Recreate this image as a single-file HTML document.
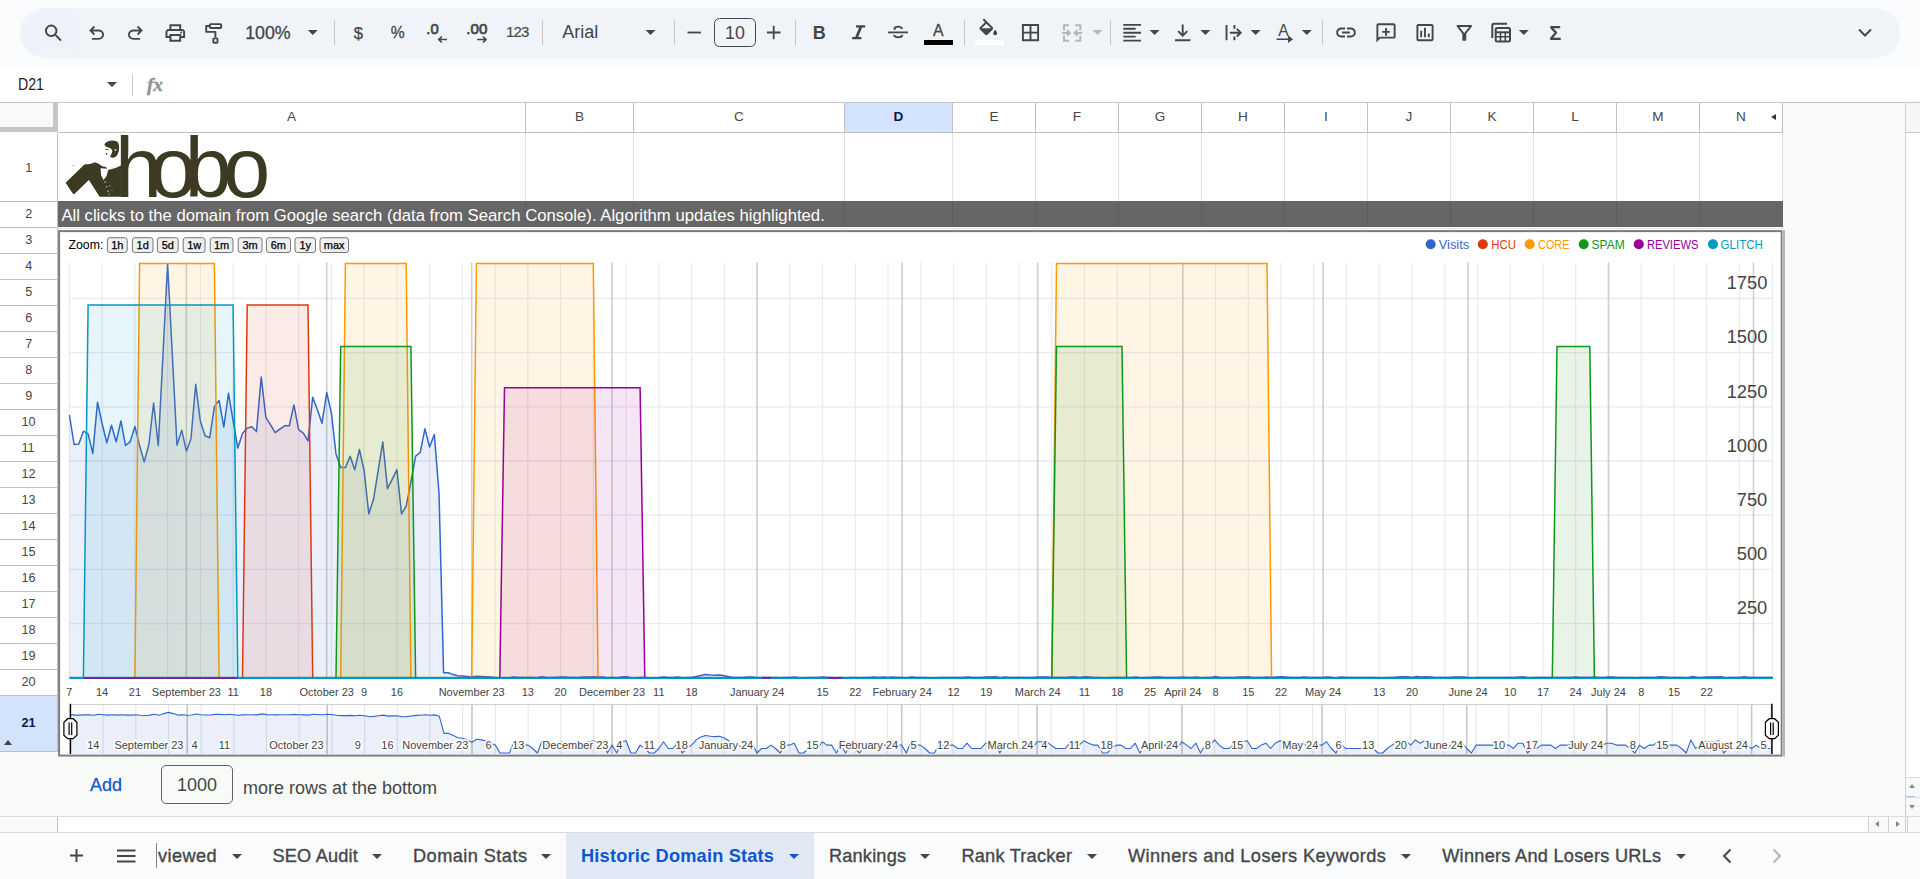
<!DOCTYPE html>
<html lang="en"><head><meta charset="utf-8"><title>Historic Domain Stats</title>
<style>
html,body{margin:0;padding:0}
body{width:1920px;height:879px;position:relative;overflow:hidden;background:#f9fbfd;font-family:"Liberation Sans",Arial,sans-serif;color:#444746}
.abs{position:absolute}
.tb{position:absolute;left:20px;top:8px;width:1880px;height:50px;border-radius:25px;background:#f0f4f9}
.sep{position:absolute;top:20px;width:1px;height:25px;background:#c7c7c7}
.t{position:absolute;white-space:nowrap;line-height:1}
.ic{position:absolute;overflow:visible}
.fbar{position:absolute;left:0;top:68px;width:1920px;height:34px;background:#fff;border-bottom:1px solid #c4c7c5}
.grid{position:absolute;left:0;top:103px;width:1920px;height:714px;background:#f8faf8}
.colh{position:absolute;top:0;height:29px;background:#fff;border-right:1px solid #c0c0c0;border-bottom:1px solid #c0c0c0;box-sizing:content-box;text-align:center;font-size:13.6px;line-height:28.600px;color:#444746}
.rowh{position:absolute;left:0;width:57px;background:#fff;border-right:1px solid #c0c0c0;border-bottom:1px solid #c0c0c0;text-align:center;font-size:13.6px;color:#444746}
.n{display:inline-block;transform:scaleX(0.93)}
.vl{position:absolute;width:1px;background:#e1e1e1}
.hl{position:absolute;height:1px;background:#e1e1e1}
.tabbar{position:absolute;left:0;top:833px;width:1920px;height:46px;background:#f9fbfd}
.tab{position:absolute;top:0;height:46px;font-size:18.2px;line-height:46px;color:#444746;white-space:nowrap;-webkit-text-stroke:0.35px #444746}
.dd{position:absolute;width:0;height:0;border-left:5px solid transparent;border-right:5px solid transparent;border-top:5px solid #444746}
</style></head><body>
<div class="tb"></div>
<svg class="ic" style="left:0;top:0" width="1920" height="66" viewBox="0 0 1920 66" font-family="Liberation Sans, Arial, sans-serif">
<rect x="31" y="15" width="47" height="35" fill="#edf1fa"/><g transform="translate(42.10 21.70) scale(0.9583)" fill="#444746" ><path d="M15.5 14h-.79l-.28-.27A6.471 6.471 0 0 0 16 9.5 6.5 6.5 0 1 0 9.5 16c1.61 0 3.09-.59 4.23-1.57l.27.28v.79l5 4.99L20.49 19l-4.99-5zm-6 0C7.01 14 5 11.99 5 9.5S7.01 5 9.5 5 14 7.01 14 9.5 11.99 14 9.5 14z"/></g><g transform="translate(85.45 44.45) scale(0.02323)" fill="#444746"><path d="M280-200v-80h284q63 0 109.5-40T720-420q0-60-46.5-100T564-560H312l104 104-56 56-200-200 200-200 56 56-104 104h252q97 0 166.5 63T800-420q0 94-69.5 157T564-200H280Z"/></g><g transform="translate(124.25 44.45) scale(0.02323)" fill="#444746"><path d="M396-200q-97 0-166.5-63T160-420q0-94 69.5-157T396-640h252L544-744l56-56 200 200-200 200-56-56 104-104H396q-63 0-109.5 40T240-420q0 60 46.5 100T396-280h284v80H396Z"/></g><g transform="translate(163.55 44.75) scale(0.02448)" fill="#444746"><path d="M640-640v-120H320v120h-80v-200h480v200h-80Zm-480 80h640-640Zm560 100q17 0 28.5-11.5T760-500q0-17-11.5-28.5T720-540q-17 0-28.5 11.5T680-500q0 17 11.5 28.5T720-460Zm-80 260v-160H320v160h320Zm80 80H240v-160H80v-240q0-51 35-85.500t85-34.500h560q51 0 85.500 34.500T880-520v240H720v160Zm80-240v-160q0-17-11.500-28.500T760-560H200q-17 0-28.500 11.500T160-520v160h80v-80h480v80h80Z"/></g><g fill="none" stroke="#444746" stroke-width="1.9" stroke-linejoin="round"><rect x="209.9" y="24.1" width="11.3" height="3.9" rx="0.8"/><path d="M209.9 26H206.200V31.900H215.400V37.500"/><rect x="213.300" y="38.400" width="4.200" height="4.400" rx="0.8"/></g><text x="245.2" y="39.2" font-size="17.8" fill="#444746" font-weight="normal" text-anchor="start" stroke="#444746" stroke-width="0.3">100%</text><path d="M307.8 30.0h10l-5 5z" fill="#444746"/><rect x="334.0" y="20" width="1" height="25" fill="#c7c7c7"/><text x="358.4" y="38.6" font-size="16.6" fill="#444746" font-weight="normal" text-anchor="middle" stroke="#444746" stroke-width="0.25">$</text><text x="397.6" y="38.4" font-size="15.6" fill="#444746" font-weight="normal" text-anchor="middle" stroke="#444746" stroke-width="0.3">%</text><text x="426.3" y="34.0" font-size="15.2" fill="#444746" font-weight="normal" text-anchor="start" stroke="#444746" stroke-width="0.7" textLength="12.3" lengthAdjust="spacingAndGlyphs">.0</text><path d="M447 39.500h-8M441.800 36.500l-3 3 3 3" stroke="#444746" stroke-width="1.7" fill="none"/><text x="466.3" y="34.0" font-size="15.2" fill="#444746" font-weight="normal" text-anchor="start" stroke="#444746" stroke-width="0.7" textLength="21" lengthAdjust="spacingAndGlyphs">.00</text><path d="M477 39.500h9M483 36.500l3 3-3 3" stroke="#444746" stroke-width="1.7" fill="none"/><text x="506.0" y="36.6" font-size="15" fill="#444746" font-weight="normal" text-anchor="start" letter-spacing="-0.9" stroke="#444746" stroke-width="0.15">123</text><rect x="542.0" y="20" width="1" height="25" fill="#c7c7c7"/><text x="562.2" y="38.3" font-size="18" fill="#444746" font-weight="normal" text-anchor="start" >Arial</text><path d="M645.5 30.0h10l-5 5z" fill="#444746"/><rect x="674.0" y="20" width="1" height="25" fill="#c7c7c7"/><path d="M687.500 32.500h13.500" stroke="#444746" stroke-width="1.8"/><rect x="714.500" y="18.500" width="41" height="28" rx="5" fill="none" stroke="#444746" stroke-width="1"/><text x="735.0" y="39.0" font-size="17.8" fill="#444746" font-weight="normal" text-anchor="middle" >10</text><path d="M767 32.500h13.500M773.700 25.800v13.500" stroke="#444746" stroke-width="1.8"/><rect x="795.0" y="20" width="1" height="25" fill="#c7c7c7"/><text x="819.2" y="38.8" font-size="18" fill="#444746" font-weight="bold" text-anchor="middle" >B</text><path d="M856 25.300h9.200v2.300h-3.100l-3.900 9.300h3.200v2.300h-9.300v-2.300h3.100l3.900-9.300h-3.100z" fill="#444746"/><text x="898.0" y="38.3" font-size="16.5" fill="#444746" font-weight="normal" text-anchor="middle" stroke="#444746" stroke-width="0.5">S</text><rect x="888" y="29.800" width="20" height="5" fill="#f0f4f9"/><rect x="888" y="31.500" width="20" height="1.800" fill="#444746"/><text x="938.4" y="36.4" font-size="16.6" fill="#444746" font-weight="normal" text-anchor="middle" stroke="#444746" stroke-width="0.3" textLength="10.600" lengthAdjust="spacingAndGlyphs">A</text><rect x="924" y="40" width="29" height="5" fill="#000"/><rect x="964.0" y="20" width="1" height="25" fill="#c7c7c7"/><g transform="translate(976.55 18.55) scale(0.9792)" fill="#444746" ><path d="M16.56 8.94L7.62 0 6.21 1.41l2.38 2.38-5.15 5.15a1.49 1.49 0 0 0 0 2.120l5.500 5.500c.29.29.68.44 1.060.44s.77-.15 1.060-.44l5.500-5.500c.59-.58.59-1.530 0-2.120zM5.210 10L10 5.210 14.790 10H5.210zM19 11.500s-2 2.170-2 3.500c0 1.100.9 2 2 2s2-.9 2-2c0-1.330-2-3.500-2-3.500z"/></g><rect x="975" y="40" width="29" height="5" fill="#fff"/><g transform="translate(1019.10 21.20) scale(0.9500)" fill="#444746" ><path d="M3 3v18h18V3H3zm8 16H5v-6h6v6zm0-8H5V5h6v6zm8 8h-6v-6h6v6zm0-8h-6V5h6v6z"/></g><path d="M1069 25.300H1064V30.400M1064 35.600V40.700H1069M1075.200 25.300H1080.300V30.400M1080.300 35.600V40.700H1075.200M1062.200 33H1069.800M1067 30.200L1069.900 33L1067 35.800M1082.200 33H1074.600M1077.400 30.200L1074.500 33L1077.400 35.800" fill="none" stroke="#b4b7ba" stroke-width="2"/><path d="M1092.5 30.0h10l-5 5z" fill="#b4b7ba"/><rect x="1110.0" y="20" width="1" height="25" fill="#c7c7c7"/><g transform="translate(1120.40 20.90) scale(0.9833)" fill="none" stroke="#444746" stroke-width="1.9" ><path d="M3 4h18M3 8h12.500M3 12h18M3 16h12.500M3 20h18"/></g><path d="M1149.6 30.0h10l-5 5z" fill="#444746"/><g transform="translate(1171.20 21.10) scale(0.9583)" fill="none" stroke="#444746" stroke-width="2" ><path d="M12 3.500v11.500M7.200 10.500l4.800 4.800 4.800-4.800M4 20h16"/></g><path d="M1200.4 30.0h10l-5 5z" fill="#444746"/><g transform="translate(1222.20 21.20) scale(0.9583)" fill="none" stroke="#444746" stroke-width="2" ><path d="M4.500 4v16M12.700 4v4M12.700 16v4M8 12h11M15.300 8l4 4-4 4"/></g><path d="M1250.6 30.0h10l-5 5z" fill="#444746"/><text x="1283.5" y="36.3" font-size="16.5" fill="#444746" font-weight="normal" text-anchor="middle" textLength="10.400" lengthAdjust="spacingAndGlyphs">A</text><path d="M1276.500 39.200h13.500M1288.800 36.900l3 2.300-3 2.300z" stroke="#444746" stroke-width="1.500" fill="#444746"/><path d="M1301.8 30.0h10l-5 5z" fill="#444746"/><rect x="1322.0" y="20" width="1" height="25" fill="#c7c7c7"/><g transform="translate(1334.25 20.75) scale(0.9792)" fill="#444746" ><path d="M3.9 12c0-1.71 1.39-3.1 3.1-3.1h4V7H7c-2.76 0-5 2.24-5 5s2.240 5 5 5h4v-1.900H7c-1.710 0-3.100-1.390-3.100-3.100zM8 13h8v-2H8v2zm9-6h-4v1.900h4c1.710 0 3.100 1.390 3.100 3.100s-1.390 3.100-3.100 3.100h-4V17h4c2.760 0 5-2.240 5-5s-2.240-5-5-5z"/></g><g transform="translate(1374.50 21.30) scale(0.9583)" fill="#444746" ><path d="M22 4c0-1.1-.9-2-2-2H4c-1.100 0-1.990.9-1.990 2L2 22l4-4h14c1.100 0 2-.9 2-2V4zm-2 12H5.170L4 17.170V4h16v12zm-9-1h2v-3h3v-2h-3V7h-2v3H8v2h3v3z"/></g><g transform="translate(1413.60 21.20) scale(0.9500)" fill="#444746" ><path d="M19 3H5c-1.100 0-2 .9-2 2v14c0 1.100.9 2 2 2h14c1.100 0 2-.9 2-2V5c0-1.100-.9-2-2-2zm0 16H5V5h14v14zM7 10h2v7H7zm4-3h2v10h-2zm4 6h2v4h-2z"/></g><g transform="translate(1452.55 21.05) scale(0.9792)" fill="#444746" ><path d="M7 6h10l-5.010 6.300L7 6zm-2.750-.39C6.270 8.200 10 13 10 13v6c0 .550.450 1 1 1h2c.550 0 1-.450 1-1v-6s3.720-4.800 5.740-7.390A.998.998 0 0 0 18.950 4H5.040c-.830 0-1.300.950-.790 1.610z"/></g><g fill="none" stroke="#444746"><path d="M1492.300 38V25.300a1.500 1.500 0 0 1 1.500-1.500H1507" stroke-width="2"/><rect x="1495.700" y="27.900" width="14.300" height="13.500" rx="1.500" stroke-width="2"/><path d="M1495.700 32.300H1510" stroke-width="2"/><path d="M1495.700 36.800H1510M1500.500 32.300V41.400M1505.300 32.300V41.400" stroke-width="1.600"/></g><path d="M1518.8 30.0h10l-5 5z" fill="#444746"/><text x="1555.2" y="39.5" font-size="20" fill="#444746" font-weight="bold" text-anchor="middle" >Σ</text><path d="M1859 29.500l6 6 6-6" stroke="#444746" stroke-width="2" fill="none"/>
</svg>
<div class="fbar"></div>
<div class="t" style="left:18px;top:76px;font-size:16.3px;color:#1f1f1f;transform:scaleX(0.87);transform-origin:0 0">D21</div>
<div class="dd" style="left:107px;top:82px;border-top-color:#444746"></div>
<div class="abs" style="left:132px;top:75px;width:1px;height:21px;background:#c7c7c7"></div>
<div class="t" style="left:147px;top:75px;font-size:19.5px;font-family:'Liberation Serif',serif;font-style:italic;font-weight:bold;color:#8e9195;letter-spacing:-0.3px;-webkit-text-stroke:0.3px #8e9195">fx</div>
<div class="grid">
<div class="abs" style="left:58px;top:30px;width:1725px;height:624px;background:#fff"></div>
<div class="abs" style="left:0;top:0;width:53px;height:24px;background:#f8f9fa"></div><div class="abs" style="left:53px;top:0;width:5px;height:29px;background:#c6c6c6"></div><div class="abs" style="left:0;top:24px;width:58px;height:5px;background:#c6c6c6"></div>
<div class="colh" style="left:58px;width:467px;">A</div><div class="colh" style="left:526px;width:107px;">B</div><div class="colh" style="left:634px;width:210px;">C</div><div class="colh" style="left:845px;width:107px;background:#d3e3fd;color:#041e49;font-weight:bold;">D</div><div class="colh" style="left:953px;width:82px;">E</div><div class="colh" style="left:1036px;width:82px;">F</div><div class="colh" style="left:1119px;width:82px;">G</div><div class="colh" style="left:1202px;width:82px;">H</div><div class="colh" style="left:1285px;width:82px;">I</div><div class="colh" style="left:1368px;width:82px;">J</div><div class="colh" style="left:1451px;width:82px;">K</div><div class="colh" style="left:1534px;width:82px;">L</div><div class="colh" style="left:1617px;width:82px;">M</div><div class="colh" style="left:1700px;width:82px;">N</div>
<div class="abs" style="left:1771px;top:11.3px;width:0;height:0;border-top:3.8px solid transparent;border-bottom:3.8px solid transparent;border-right:5.2px solid #333"></div>
<div class="rowh" style="top:30px;height:68px;line-height:69px;"><span class="n">1</span></div><div class="rowh" style="top:99px;height:25px;line-height:23px;"><span class="n">2</span></div><div class="rowh" style="top:125px;height:25px;line-height:23px;"><span class="n">3</span></div><div class="rowh" style="top:151px;height:25px;line-height:23px;"><span class="n">4</span></div><div class="rowh" style="top:177px;height:25px;line-height:23px;"><span class="n">5</span></div><div class="rowh" style="top:203px;height:25px;line-height:23px;"><span class="n">6</span></div><div class="rowh" style="top:229px;height:25px;line-height:23px;"><span class="n">7</span></div><div class="rowh" style="top:255px;height:25px;line-height:23px;"><span class="n">8</span></div><div class="rowh" style="top:281px;height:25px;line-height:23px;"><span class="n">9</span></div><div class="rowh" style="top:307px;height:25px;line-height:23px;"><span class="n">10</span></div><div class="rowh" style="top:333px;height:25px;line-height:23px;"><span class="n">11</span></div><div class="rowh" style="top:359px;height:25px;line-height:23px;"><span class="n">12</span></div><div class="rowh" style="top:385px;height:25px;line-height:23px;"><span class="n">13</span></div><div class="rowh" style="top:411px;height:25px;line-height:23px;"><span class="n">14</span></div><div class="rowh" style="top:437px;height:25px;line-height:23px;"><span class="n">15</span></div><div class="rowh" style="top:463px;height:25px;line-height:23px;"><span class="n">16</span></div><div class="rowh" style="top:489px;height:25px;line-height:23px;"><span class="n">17</span></div><div class="rowh" style="top:515px;height:25px;line-height:23px;"><span class="n">18</span></div><div class="rowh" style="top:541px;height:25px;line-height:23px;"><span class="n">19</span></div><div class="rowh" style="top:567px;height:25px;line-height:23px;"><span class="n">20</span></div><div class="rowh" style="top:593px;height:55px;line-height:54px;background:#d3e3fd;color:#041e49;font-weight:bold;"><span class="n">21</span></div>
<div class="abs" style="left:4px;top:637px;width:0;height:0;border-left:4.5px solid transparent;border-right:4.5px solid transparent;border-bottom:5px solid #444"></div>
<div class="vl" style="left:525px;top:30px;height:69px"></div><div class="vl" style="left:633px;top:30px;height:69px"></div><div class="vl" style="left:844px;top:30px;height:69px"></div><div class="vl" style="left:952px;top:30px;height:69px"></div><div class="vl" style="left:1035px;top:30px;height:69px"></div><div class="vl" style="left:1118px;top:30px;height:69px"></div><div class="vl" style="left:1201px;top:30px;height:69px"></div><div class="vl" style="left:1284px;top:30px;height:69px"></div><div class="vl" style="left:1367px;top:30px;height:69px"></div><div class="vl" style="left:1450px;top:30px;height:69px"></div><div class="vl" style="left:1533px;top:30px;height:69px"></div><div class="vl" style="left:1616px;top:30px;height:69px"></div><div class="vl" style="left:1699px;top:30px;height:69px"></div><div class="vl" style="left:1782px;top:30px;height:69px"></div>
<div class="hl" style="left:58px;top:98px;width:1725px"></div><div class="hl" style="left:58px;top:125px;width:1725px;background:#e6e6e6"></div>
<svg class="ic" style="left:0;top:-103px" width="1920" height="879" viewBox="0 0 1920 879" font-family="Liberation Sans, Arial, sans-serif">
<title>hobo</title><text font-size="84.500" fill="#3c3a23" y="197" x="114.930 149.700 184.730 223.300">hobo</text>
<g transform="translate(60 134) scale(0.07508)" fill="#3c3a23"><path d="M75 650L325 405L400 398L465 376L520 398L560 428L612 440L640 478L740 452L812 418V836H528L385 612L185 806L158 775Z"/><path d="M590 137C618 92 700 68 760 100C796 130 796 222 766 272C742 312 700 326 670 306C664 290 690 270 695 240C700 214 690 196 660 186C634 179 608 176 590 137Z"/><path d="M604 198l44 8-2 12-44-8zM612 252l18 4-4 24-18-8z"/><path d="M540 456L646 462L620 560L580 612L548 550Z" fill="#fff"/><circle cx="738" cy="214" r="13" fill="#fff" fill-opacity="0.8"/><g fill="#fff" fill-opacity="0.75"><circle cx="600" cy="640" r="10"/><circle cx="622" cy="702" r="9"/><circle cx="664" cy="690" r="8"/><circle cx="640" cy="762" r="10"/><circle cx="692" cy="750" r="7"/><circle cx="655" cy="800" r="9"/></g><path d="M170 410l22 10-4 10-22-10z" fill-opacity="0.5"/></g>
</svg>
<div class="abs" style="left:58px;top:98px;width:1725px;height:26px;background:#666"></div>
<div class="abs" style="left:525px;top:98px;width:1px;height:26px;background:#5e5e5e"></div><div class="abs" style="left:633px;top:98px;width:1px;height:26px;background:#5e5e5e"></div><div class="abs" style="left:844px;top:98px;width:1px;height:26px;background:#5e5e5e"></div><div class="abs" style="left:952px;top:98px;width:1px;height:26px;background:#5e5e5e"></div><div class="abs" style="left:1035px;top:98px;width:1px;height:26px;background:#5e5e5e"></div><div class="abs" style="left:1118px;top:98px;width:1px;height:26px;background:#5e5e5e"></div><div class="abs" style="left:1201px;top:98px;width:1px;height:26px;background:#5e5e5e"></div><div class="abs" style="left:1284px;top:98px;width:1px;height:26px;background:#5e5e5e"></div><div class="abs" style="left:1367px;top:98px;width:1px;height:26px;background:#5e5e5e"></div><div class="abs" style="left:1450px;top:98px;width:1px;height:26px;background:#5e5e5e"></div><div class="abs" style="left:1533px;top:98px;width:1px;height:26px;background:#5e5e5e"></div><div class="abs" style="left:1616px;top:98px;width:1px;height:26px;background:#5e5e5e"></div><div class="abs" style="left:1699px;top:98px;width:1px;height:26px;background:#5e5e5e"></div>
<div class="t" style="left:61.4px;top:104.600px;font-size:16.7px;color:#fff">All clicks to the domain from Google search (data from Search Console). Algorithm updates highlighted.</div>
<svg class="ic" style="left:0;top:-103px" width="1920" height="879" viewBox="0 0 1920 879" font-family="Liberation Sans, Arial, sans-serif">
<rect x="59.100" y="231.100" width="1722.600" height="524.500" fill="#fff" stroke="#7d7d7d" stroke-width="2"/><rect x="1782.700" y="230.100" width="0.600" height="526.500" fill="#fff"/><rect x="1783.300" y="230.100" width="1.400" height="526.500" fill="#9a9a9a"/>
<text x="68.500" y="249" font-size="12.300" fill="#000">Zoom:</text><rect x="107.4" y="237.700" width="19.8" height="14.800" rx="2.500" fill="#efefef" stroke="#767676" stroke-width="1"/><text x="117.3" y="248.700" font-size="11" fill="#000" text-anchor="middle" stroke="#000" stroke-width="0.250">1h</text><rect x="132.4" y="237.700" width="20.6" height="14.800" rx="2.500" fill="#efefef" stroke="#767676" stroke-width="1"/><text x="142.7" y="248.700" font-size="11" fill="#000" text-anchor="middle" stroke="#000" stroke-width="0.250">1d</text><rect x="157.4" y="237.700" width="20.8" height="14.800" rx="2.500" fill="#efefef" stroke="#767676" stroke-width="1"/><text x="167.8" y="248.700" font-size="11" fill="#000" text-anchor="middle" stroke="#000" stroke-width="0.250">5d</text><rect x="183.2" y="237.700" width="21.8" height="14.800" rx="2.500" fill="#efefef" stroke="#767676" stroke-width="1"/><text x="194.2" y="248.700" font-size="11" fill="#000" text-anchor="middle" stroke="#000" stroke-width="0.250">1w</text><rect x="210.2" y="237.700" width="22.8" height="14.800" rx="2.500" fill="#efefef" stroke="#767676" stroke-width="1"/><text x="221.6" y="248.700" font-size="11" fill="#000" text-anchor="middle" stroke="#000" stroke-width="0.250">1m</text><rect x="238.2" y="237.700" width="23.8" height="14.800" rx="2.500" fill="#efefef" stroke="#767676" stroke-width="1"/><text x="250.1" y="248.700" font-size="11" fill="#000" text-anchor="middle" stroke="#000" stroke-width="0.250">3m</text><rect x="266.4" y="237.700" width="24.1" height="14.800" rx="2.500" fill="#efefef" stroke="#767676" stroke-width="1"/><text x="278.4" y="248.700" font-size="11" fill="#000" text-anchor="middle" stroke="#000" stroke-width="0.250">6m</text><rect x="295" y="237.700" width="20.5" height="14.800" rx="2.500" fill="#efefef" stroke="#767676" stroke-width="1"/><text x="305.2" y="248.700" font-size="11" fill="#000" text-anchor="middle" stroke="#000" stroke-width="0.250">1y</text><rect x="320" y="237.700" width="28.5" height="14.800" rx="2.500" fill="#efefef" stroke="#767676" stroke-width="1"/><text x="334.2" y="248.700" font-size="11" fill="#000" text-anchor="middle" stroke="#000" stroke-width="0.250">max</text>
<circle cx="1430.7" cy="244.300" r="5" fill="#3366cc"/><text x="1438.8" y="248.600" font-size="12" fill="#3366cc" textLength="30.3" lengthAdjust="spacingAndGlyphs">Visits</text><circle cx="1482.8" cy="244.300" r="5" fill="#dc3912"/><text x="1491.2" y="248.600" font-size="12" fill="#dc3912" textLength="24.8" lengthAdjust="spacingAndGlyphs">HCU</text><circle cx="1529.7" cy="244.300" r="5" fill="#ff9900"/><text x="1538.1" y="248.600" font-size="12" fill="#ff9900" textLength="31.3" lengthAdjust="spacingAndGlyphs">CORE</text><circle cx="1583.7" cy="244.300" r="5" fill="#109618"/><text x="1591.6" y="248.600" font-size="12" fill="#109618" textLength="33.2" lengthAdjust="spacingAndGlyphs">SPAM</text><circle cx="1638.8" cy="244.300" r="5" fill="#990099"/><text x="1646.9" y="248.600" font-size="12" fill="#990099" textLength="51.5" lengthAdjust="spacingAndGlyphs">REVIEWS</text><circle cx="1712.9" cy="244.300" r="5" fill="#0099c6"/><text x="1720.6" y="248.600" font-size="12" fill="#0099c6" textLength="42.2" lengthAdjust="spacingAndGlyphs">GLITCH</text>
<path d="M69.4 262.500V677M102.1 262.500V677M134.9 262.500V677M167.6 262.500V677M200.4 262.500V677M233.1 262.500V677M265.9 262.500V677M298.6 262.500V677M331.4 262.500V677M364.1 262.500V677M396.9 262.500V677M429.6 262.500V677M462.4 262.500V677M495.1 262.500V677M527.8 262.500V677M560.6 262.500V677M593.3 262.500V677M626.1 262.500V677M658.8 262.500V677M691.6 262.500V677M724.3 262.500V677M757.1 262.500V677M789.8 262.500V677M822.6 262.500V677M855.3 262.500V677M888 262.500V677M920.8 262.500V677M953.5 262.500V677M986.3 262.500V677M1019 262.500V677M1051.8 262.500V677M1084.5 262.500V677M1117.3 262.500V677M1150 262.500V677M1182.8 262.500V677M1215.5 262.500V677M1248.3 262.500V677M1281 262.500V677M1313.7 262.500V677M1346.5 262.500V677M1379.2 262.500V677M1412 262.500V677M1444.7 262.500V677M1477.5 262.500V677M1510.2 262.500V677M1543 262.500V677M1575.7 262.500V677M1608.5 262.500V677M1641.2 262.500V677M1674 262.500V677M1706.7 262.500V677M1739.4 262.500V677M1772.2 262.500V677" stroke="#e9e9ee" stroke-width="1.100" fill="none"/><path d="M69 623.6H1773M69 569.4H1773M69 515.2H1773M69 461H1773M69 406.8H1773M69 352.6H1773M69 298.4H1773" stroke="#e9e9f6" stroke-width="1.300" fill="none"/><path d="M186.4 262.500V677M326.7 262.500V677M471.7 262.500V677M612 262.500V677M757.1 262.500V677M902.1 262.500V677M1037.7 262.500V677M1182.8 262.500V677M1323.1 262.500V677M1468.1 262.500V677M1608.5 262.500V677M1753.5 262.500V677" stroke="#cfcfcf" stroke-width="1.600" fill="none"/>
<path d="M69.4 415L74.1 444.5L78.8 444L83.4 431.2L88.1 433.8L92.8 453.4L97.5 402.2L102.1 423.5L106.8 442.8L111.5 425.2L116.2 441.8L120.9 421L125.5 445.4L130.2 441.8L134.9 426.4L139.6 445.7L144.2 461.9L148.9 444.5L153.6 403L158.3 445.7L163 354.6L167.6 263.8L172.3 354.6L177 445.3L181.7 430.2L186.4 451.2L191 438.4L195.7 384.3L200.4 421.5L205.1 435.8L209.7 437.8L214.4 406.6L219.1 400.5L223.8 427.1L228.5 393.3L233.1 420.7L237.8 448.1L242.5 433.5L247.2 428.1L251.8 426.8L256.5 431.6L261.2 377L265.9 417.7L270.6 424.8L275.2 432.6L279.9 429.1L284.6 425.8L289.3 425.8L293.9 404.9L298.6 429.7L303.3 433.2L308 440.9L312.7 397.2L317.3 409.4L322 423.3L326.7 392.5L331.4 413.2L336 453.9L340.7 467.6L345.4 467.6L350.1 456.3L354.8 469.7L359.4 449.5L364.1 470.5L368.8 513.9L373.5 499.3L378.1 471.1L382.8 441.9L387.5 488.7L392.2 479.3L396.9 469.6L401.5 513.9L406.2 506.2L410.9 482L415.6 456.1L420.2 452.5L424.9 428.8L429.6 447L434.3 434.6L439 492.9L443.6 672.7L448.3 672.7L453 674.6L457.7 675.8L462.4 676L467 676.5L471.7 677L476.4 676.3L481.1 676.5L485.7 676.7L490.4 677.1L495.1 677.4L499.8 677.8L504.5 677.8L509.1 677.8L513.8 676.9L518.5 677.4L523.2 677.4L527.8 677.4L532.5 677.6L537.2 677.8L541.9 676.7L546.6 677.4L551.2 677.4L555.9 677.6L560.6 676.9L565.3 677.1L569.9 677.6L574.6 677.6L579.3 677.4L584 677.1L588.7 676.9L593.3 676.7L598 677.1L602.7 676.9L607.4 677.8L612 677.4L616.7 677.8L621.4 676.9L626.1 676.7L630.8 677.8L635.4 677.8L640.1 677.4L644.8 677.6L649.5 677.8L654.1 677.8L658.8 677.6L663.5 676.9L668.2 677.6L672.9 677.6L677.5 677.1L682.2 677.8L686.9 677.6L691.6 677.4L696.3 676.5L700.9 675.4L705.6 674.5L710.3 675L715 675.2L719.6 675L724.3 675.8L729 676.7L733.7 677.6L738.4 677.4L743 677.6L747.7 677.1L752.4 677.1L757.1 677.8L761.7 677.6L766.4 677.6L771.1 677.4L775.8 677.6L780.5 677.8L785.1 677.4L789.8 677.4L794.5 677.1L799.2 677.8L803.8 677.8L808.5 677.6L813.2 677.6L817.9 677.6L822.6 676.9L827.2 677.4L831.9 677.4L836.6 677.8L841.3 677.4L845.9 677.8L850.6 677.4L855.3 677.6L860 677.8L864.7 677.4L869.3 677.4L874 677.1L878.7 677.6L883.4 677.1L888 677.6L892.7 677.1L897.4 677.4L902.1 677.4L906.8 677.8L911.4 676.9L916.1 677.4L920.8 677.4L925.5 677.6L930.2 677.8L934.8 677.8L939.5 677.4L944.2 677.4L948.9 677.4L953.5 677.4L958.2 677.6L962.9 677.6L967.6 677.1L972.3 677.6L976.9 677.6L981.6 677.6L986.3 677.1L991 677.1L995.6 676.7L1000.3 677.8L1005 677.1L1009.7 677.4L1014.4 677.4L1019 677.6L1023.7 677.6L1028.4 677.4L1033.1 677.6L1037.7 676.9L1042.4 676.9L1047.1 676.9L1051.8 677.4L1056.5 677.6L1061.1 677.6L1065.8 677.6L1070.5 677.1L1075.2 677.1L1079.8 677.4L1084.5 676.7L1089.2 677.1L1093.9 677.4L1098.6 677.4L1103.2 677.8L1107.9 677.8L1112.6 677.6L1117.3 677.4L1122 677.4L1126.6 677.6L1131.3 677.6L1136 677.1L1140.7 677.8L1145.3 677.4L1150 677.6L1154.7 677.1L1159.4 676.9L1164.1 677.4L1168.7 677.4L1173.4 677.4L1178.1 677.6L1182.8 676.9L1187.4 677.4L1192.1 677.6L1196.8 677.1L1201.5 677.8L1206.2 677.4L1210.8 677.4L1215.5 676.5L1220.2 677.4L1224.9 677.6L1229.5 677.6L1234.2 677.4L1238.9 677.1L1243.6 676.9L1248.3 676.7L1252.9 677.6L1257.6 677.6L1262.3 677.4L1267 677.1L1271.6 677.6L1276.3 677.1L1281 676.7L1285.7 676.9L1290.4 677.4L1295 677.4L1299.7 677.4L1304.4 676.9L1309.1 677.6L1313.7 677.4L1318.4 677.4L1323.1 677.4L1327.8 676.9L1332.5 677.6L1337.1 677.8L1341.8 677.1L1346.5 677.6L1351.2 677.6L1355.9 677.6L1360.5 677.6L1365.2 677.6L1369.9 677.4L1374.6 677.6L1379.2 677.8L1383.9 677.8L1388.6 677.6L1393.3 677.4L1398 676.9L1402.6 676.7L1407.3 676.7L1412 677.4L1416.7 676.5L1421.3 677.1L1426 676.7L1430.7 677.1L1435.4 677.6L1440.1 677.6L1444.7 677.6L1449.4 677.6L1454.1 676.9L1458.8 677.1L1463.4 677.1L1468.1 677.6L1472.8 677.8L1477.5 677.4L1482.2 677.4L1486.8 677.4L1491.5 677.4L1496.2 677.4L1500.9 677.4L1505.5 677.4L1510.2 677.4L1514.9 677.6L1519.6 677.1L1524.3 677.1L1528.9 677.8L1533.6 677.6L1538.3 677.6L1543 677.4L1547.6 677.4L1552.3 677.4L1557 677.6L1561.7 677.4L1566.4 677.4L1571 677.4L1575.7 677.1L1580.4 677.4L1585.1 677.4L1589.8 677.4L1594.4 676.9L1599.1 677.6L1603.8 677.4L1608.5 677.1L1613.1 677.1L1617.8 677.4L1622.5 677.4L1627.2 677.4L1631.9 677.6L1636.5 677.8L1641.2 677.4L1645.9 677.6L1650.6 677.4L1655.2 677.4L1659.9 676.7L1664.6 676.9L1669.3 677.4L1674 677.4L1678.6 677.4L1683.3 677.6L1688 677.8L1692.7 676.5L1697.3 677.6L1702 677.4L1706.7 676.9L1711.4 676.9L1716.1 676.9L1720.7 676.7L1725.4 677.8L1730.1 677.6L1734.8 677.6L1739.4 677.6L1744.1 676.7L1748.8 677.4L1753.5 677.6L1758.2 677.4L1762.8 677.6L1767.5 677.6L1772.2 677.6L1772.2 677.8L69.4 677.8Z" fill="#3366cc" fill-opacity="0.1" stroke="none"/><path d="M69.4 415L74.1 444.5L78.8 444L83.4 431.2L88.1 433.8L92.8 453.4L97.5 402.2L102.1 423.5L106.8 442.8L111.5 425.2L116.2 441.8L120.9 421L125.5 445.4L130.2 441.8L134.9 426.4L139.6 445.7L144.2 461.9L148.9 444.5L153.6 403L158.3 445.7L163 354.6L167.6 263.8L172.3 354.6L177 445.3L181.7 430.2L186.4 451.2L191 438.4L195.7 384.3L200.4 421.5L205.1 435.8L209.7 437.8L214.4 406.6L219.1 400.5L223.8 427.1L228.5 393.3L233.1 420.7L237.8 448.1L242.5 433.5L247.2 428.1L251.8 426.8L256.5 431.6L261.2 377L265.9 417.7L270.6 424.8L275.2 432.6L279.9 429.1L284.6 425.8L289.3 425.8L293.9 404.9L298.6 429.7L303.3 433.2L308 440.9L312.7 397.2L317.3 409.4L322 423.3L326.7 392.5L331.4 413.2L336 453.9L340.7 467.6L345.4 467.6L350.1 456.3L354.8 469.7L359.4 449.5L364.1 470.5L368.8 513.9L373.5 499.3L378.1 471.1L382.8 441.9L387.5 488.7L392.2 479.3L396.9 469.6L401.5 513.9L406.2 506.2L410.9 482L415.6 456.1L420.2 452.5L424.9 428.8L429.6 447L434.3 434.6L439 492.9L443.6 672.7L448.3 672.7L453 674.6L457.7 675.8L462.4 676L467 676.5L471.7 677L476.4 676.3L481.1 676.5L485.7 676.7L490.4 677.1L495.1 677.4L499.8 677.8L504.5 677.8L509.1 677.8L513.8 676.9L518.5 677.4L523.2 677.4L527.8 677.4L532.5 677.6L537.2 677.8L541.9 676.7L546.6 677.4L551.2 677.4L555.9 677.6L560.6 676.9L565.3 677.1L569.9 677.6L574.6 677.6L579.3 677.4L584 677.1L588.7 676.9L593.3 676.7L598 677.1L602.7 676.9L607.4 677.8L612 677.4L616.7 677.8L621.4 676.9L626.1 676.7L630.8 677.8L635.4 677.8L640.1 677.4L644.8 677.6L649.5 677.8L654.1 677.8L658.8 677.6L663.5 676.9L668.2 677.6L672.9 677.6L677.5 677.1L682.2 677.8L686.9 677.6L691.6 677.4L696.3 676.5L700.9 675.4L705.6 674.5L710.3 675L715 675.2L719.6 675L724.3 675.8L729 676.7L733.7 677.6L738.4 677.4L743 677.6L747.7 677.1L752.4 677.1L757.1 677.8L761.7 677.6L766.4 677.6L771.1 677.4L775.8 677.6L780.5 677.8L785.1 677.4L789.8 677.4L794.5 677.1L799.2 677.8L803.8 677.8L808.5 677.6L813.2 677.6L817.9 677.6L822.6 676.9L827.2 677.4L831.9 677.4L836.6 677.8L841.3 677.4L845.9 677.8L850.6 677.4L855.3 677.6L860 677.8L864.7 677.4L869.3 677.4L874 677.1L878.7 677.6L883.4 677.1L888 677.6L892.7 677.1L897.4 677.4L902.1 677.4L906.8 677.8L911.4 676.9L916.1 677.4L920.8 677.4L925.5 677.6L930.2 677.8L934.8 677.8L939.5 677.4L944.2 677.4L948.9 677.4L953.5 677.4L958.2 677.6L962.9 677.6L967.6 677.1L972.3 677.6L976.9 677.6L981.6 677.6L986.3 677.1L991 677.1L995.6 676.7L1000.3 677.8L1005 677.1L1009.7 677.4L1014.4 677.4L1019 677.6L1023.7 677.6L1028.4 677.4L1033.1 677.6L1037.7 676.9L1042.4 676.9L1047.1 676.9L1051.8 677.4L1056.5 677.6L1061.1 677.6L1065.8 677.6L1070.5 677.1L1075.2 677.1L1079.8 677.4L1084.5 676.7L1089.2 677.1L1093.9 677.4L1098.6 677.4L1103.2 677.8L1107.9 677.8L1112.6 677.6L1117.3 677.4L1122 677.4L1126.6 677.6L1131.3 677.6L1136 677.1L1140.7 677.8L1145.3 677.4L1150 677.6L1154.7 677.1L1159.4 676.9L1164.1 677.4L1168.7 677.4L1173.4 677.4L1178.1 677.6L1182.8 676.9L1187.4 677.4L1192.1 677.6L1196.8 677.1L1201.5 677.8L1206.2 677.4L1210.8 677.4L1215.5 676.5L1220.2 677.4L1224.9 677.6L1229.5 677.6L1234.2 677.4L1238.9 677.1L1243.6 676.9L1248.3 676.7L1252.9 677.6L1257.6 677.6L1262.3 677.4L1267 677.1L1271.6 677.6L1276.3 677.1L1281 676.7L1285.7 676.9L1290.4 677.4L1295 677.4L1299.7 677.4L1304.4 676.9L1309.1 677.6L1313.7 677.4L1318.4 677.4L1323.1 677.4L1327.8 676.9L1332.5 677.6L1337.1 677.8L1341.8 677.1L1346.5 677.6L1351.2 677.6L1355.9 677.6L1360.5 677.6L1365.2 677.6L1369.9 677.4L1374.6 677.6L1379.2 677.8L1383.9 677.8L1388.6 677.6L1393.3 677.4L1398 676.9L1402.6 676.7L1407.3 676.7L1412 677.4L1416.7 676.5L1421.3 677.1L1426 676.7L1430.7 677.1L1435.4 677.6L1440.1 677.6L1444.7 677.6L1449.4 677.6L1454.1 676.9L1458.8 677.1L1463.4 677.1L1468.1 677.6L1472.8 677.8L1477.5 677.4L1482.2 677.4L1486.8 677.4L1491.5 677.4L1496.2 677.4L1500.9 677.4L1505.5 677.4L1510.2 677.4L1514.9 677.6L1519.6 677.1L1524.3 677.1L1528.9 677.8L1533.6 677.6L1538.3 677.6L1543 677.4L1547.6 677.4L1552.3 677.4L1557 677.6L1561.7 677.4L1566.4 677.4L1571 677.4L1575.7 677.1L1580.4 677.4L1585.1 677.4L1589.8 677.4L1594.4 676.9L1599.1 677.6L1603.8 677.4L1608.5 677.1L1613.1 677.1L1617.8 677.4L1622.5 677.4L1627.2 677.4L1631.9 677.6L1636.5 677.8L1641.2 677.4L1645.9 677.6L1650.6 677.4L1655.2 677.4L1659.9 676.7L1664.6 676.9L1669.3 677.4L1674 677.4L1678.6 677.4L1683.3 677.6L1688 677.8L1692.7 676.5L1697.3 677.6L1702 677.4L1706.7 676.9L1711.4 676.9L1716.1 676.9L1720.7 676.7L1725.4 677.8L1730.1 677.6L1734.8 677.6L1739.4 677.6L1744.1 676.7L1748.8 677.4L1753.5 677.6L1758.2 677.4L1762.8 677.6L1767.5 677.6L1772.2 677.6" fill="none" stroke="#3366cc" stroke-width="1.500" stroke-linejoin="round"/>
<path d="M242.5 677.8L247.2 304.9L308 304.9L312.7 677.8Z" fill="#dc3912" fill-opacity="0.1" stroke="none"/><path d="M242.5 677.8L247.2 304.9L308 304.9L312.7 677.8" fill="none" stroke="#dc3912" stroke-width="1.500" stroke-linejoin="miter"/>
<path d="M134.9 677.8L139.6 263.5L214.4 263.5L219.1 677.8Z" fill="#ff9900" fill-opacity="0.1" stroke="none"/><path d="M134.9 677.8L139.6 263.5L214.4 263.5L219.1 677.8" fill="none" stroke="#ff9900" stroke-width="1.500" stroke-linejoin="miter"/><path d="M340.7 677.8L345.4 263.5L406.2 263.5L410.9 677.8Z" fill="#ff9900" fill-opacity="0.1" stroke="none"/><path d="M340.7 677.8L345.4 263.5L406.2 263.5L410.9 677.8" fill="none" stroke="#ff9900" stroke-width="1.500" stroke-linejoin="miter"/><path d="M471.7 677.8L476.4 263.5L593.3 263.5L598 677.8Z" fill="#ff9900" fill-opacity="0.1" stroke="none"/><path d="M471.7 677.8L476.4 263.5L593.3 263.5L598 677.8" fill="none" stroke="#ff9900" stroke-width="1.500" stroke-linejoin="miter"/><path d="M1051.8 677.8L1056.5 263.5L1267 263.5L1271.6 677.8Z" fill="#ff9900" fill-opacity="0.1" stroke="none"/><path d="M1051.8 677.8L1056.5 263.5L1267 263.5L1271.6 677.8" fill="none" stroke="#ff9900" stroke-width="1.500" stroke-linejoin="miter"/>
<path d="M336 677.8L340.7 346.4L410.9 346.4L415.6 677.8Z" fill="#109618" fill-opacity="0.1" stroke="none"/><path d="M336 677.8L340.7 346.4L410.9 346.4L415.6 677.8" fill="none" stroke="#109618" stroke-width="1.500" stroke-linejoin="miter"/><path d="M1051.8 677.8L1056.5 346.4L1122 346.4L1126.6 677.8Z" fill="#109618" fill-opacity="0.1" stroke="none"/><path d="M1051.8 677.8L1056.5 346.4L1122 346.4L1126.6 677.8" fill="none" stroke="#109618" stroke-width="1.500" stroke-linejoin="miter"/><path d="M1552.3 677.8L1557 346.4L1589.8 346.4L1594.4 677.8Z" fill="#109618" fill-opacity="0.1" stroke="none"/><path d="M1552.3 677.8L1557 346.4L1589.8 346.4L1594.4 677.8" fill="none" stroke="#109618" stroke-width="1.500" stroke-linejoin="miter"/>
<path d="M499.8 677.8L504.5 387.8L640.1 387.8L644.8 677.8Z" fill="#990099" fill-opacity="0.1" stroke="none"/><path d="M499.8 677.8L504.5 387.8L640.1 387.8L644.8 677.8" fill="none" stroke="#990099" stroke-width="1.500" stroke-linejoin="miter"/>
<path d="M69.400 678.200H1773" stroke="#0099c6" stroke-width="1.700"/><path d="M69.400 677.250H1773" stroke="#4a637c" stroke-width="0.800"/><path d="M83.4 678H237.8M762 678H771M827.600 678H841.700" stroke="#990099" stroke-width="1.500"/><path d="M83.4 677.8L88.1 304.9L233.1 304.9L237.8 677.8Z" fill="#0099c6" fill-opacity="0.1" stroke="none"/><path d="M83.4 677.8L88.1 304.9L233.1 304.9L237.8 677.8" fill="none" stroke="#0099c6" stroke-width="1.500" stroke-linejoin="miter"/>
<text x="1767.300" y="614.4" font-size="18.300" fill="#444" text-anchor="end">250</text><text x="1767.300" y="560.2" font-size="18.300" fill="#444" text-anchor="end">500</text><text x="1767.300" y="506" font-size="18.300" fill="#444" text-anchor="end">750</text><text x="1767.300" y="451.8" font-size="18.300" fill="#444" text-anchor="end">1000</text><text x="1767.300" y="397.6" font-size="18.300" fill="#444" text-anchor="end">1250</text><text x="1767.300" y="343.4" font-size="18.300" fill="#444" text-anchor="end">1500</text><text x="1767.300" y="289.2" font-size="18.300" fill="#444" text-anchor="end">1750</text>
<g font-size="11" fill="#444" text-anchor="middle"><text x="69.4" y="695.600">7</text><text x="102.1" y="695.600">14</text><text x="134.9" y="695.600">21</text><text x="186.4" y="695.600">September 23</text><text x="233.1" y="695.600">11</text><text x="265.9" y="695.600">18</text><text x="326.7" y="695.600">October 23</text><text x="364.1" y="695.600">9</text><text x="396.9" y="695.600">16</text><text x="471.7" y="695.600">November 23</text><text x="527.8" y="695.600">13</text><text x="560.6" y="695.600">20</text><text x="612" y="695.600">December 23</text><text x="658.8" y="695.600">11</text><text x="691.6" y="695.600">18</text><text x="757.1" y="695.600">January 24</text><text x="822.6" y="695.600">15</text><text x="855.3" y="695.600">22</text><text x="902.1" y="695.600">February 24</text><text x="953.5" y="695.600">12</text><text x="986.3" y="695.600">19</text><text x="1037.7" y="695.600">March 24</text><text x="1084.5" y="695.600">11</text><text x="1117.3" y="695.600">18</text><text x="1150" y="695.600">25</text><text x="1182.8" y="695.600">April 24</text><text x="1215.5" y="695.600">8</text><text x="1248.3" y="695.600">15</text><text x="1281" y="695.600">22</text><text x="1323.1" y="695.600">May 24</text><text x="1379.2" y="695.600">13</text><text x="1412" y="695.600">20</text><text x="1468.1" y="695.600">June 24</text><text x="1510.2" y="695.600">10</text><text x="1543" y="695.600">17</text><text x="1575.7" y="695.600">24</text><text x="1608.5" y="695.600">July 24</text><text x="1641.2" y="695.600">8</text><text x="1674" y="695.600">15</text><text x="1706.7" y="695.600">22</text></g>
<path d="M70 704.500H1772" stroke="#d0d0d0" stroke-width="1"/><path d="M103.1 705V754M135.8 705V754M168.5 705V754M201.2 705V754M233.8 705V754M266.5 705V754M299.2 705V754M331.9 705V754M364.6 705V754M397.3 705V754M430 705V754M462.7 705V754M495.4 705V754M528.1 705V754M560.8 705V754M593.4 705V754M626.1 705V754M658.8 705V754M691.5 705V754M724.2 705V754M756.9 705V754M789.6 705V754M822.3 705V754M855 705V754M887.6 705V754M920.3 705V754M953 705V754M985.7 705V754M1018.4 705V754M1051.1 705V754M1083.8 705V754M1116.5 705V754M1149.2 705V754M1181.9 705V754M1214.6 705V754M1247.2 705V754M1279.9 705V754M1312.6 705V754M1345.3 705V754M1378 705V754M1410.7 705V754M1443.4 705V754M1476.1 705V754M1508.8 705V754M1541.5 705V754M1574.1 705V754M1606.8 705V754M1639.5 705V754M1672.2 705V754M1704.9 705V754M1737.6 705V754M1770.3 705V754" stroke="#e6e6ea" stroke-width="1.100" fill="none"/><path d="M187.2 705V754M327.2 705V754M472 705V754M612.1 705V754M756.9 705V754M901.7 705V754M1037.1 705V754M1181.9 705V754M1322 705V754M1466.7 705V754M1606.8 705V754M1751.6 705V754" stroke="#c8c8c8" stroke-width="1.600" fill="none"/>
<path d="M70.4 714.6L75.1 715.1L79.7 715.1L84.4 714.9L89.1 714.9L93.8 715.3L98.4 714.3L103.1 714.7L107.8 715.1L112.4 714.8L117.1 715.1L121.8 714.7L126.4 715.1L131.1 715.1L135.8 714.8L140.4 715.2L145.1 715.5L149.8 715.1L154.5 714.3L159.1 715.2L163.8 713.6L168.5 712.4L173.1 713.6L177.8 715.1L182.5 714.8L187.2 715.3L191.8 715L196.5 714L201.2 714.7L205.8 715L210.5 715L215.2 714.4L219.8 714.3L224.5 714.8L229.2 714.2L233.8 714.7L238.5 715.2L243.2 714.9L247.9 714.8L252.5 714.8L257.2 714.9L261.9 713.9L266.5 714.6L271.2 714.7L275.9 714.9L280.6 714.8L285.2 714.8L289.9 714.8L294.6 714.4L299.2 714.8L303.9 714.9L308.6 715.1L313.2 714.2L317.9 714.5L322.6 714.7L327.2 714.2L331.9 714.5L336.6 715.3L341.3 715.6L345.9 715.6L350.6 715.4L355.3 715.7L359.9 715.2L364.6 715.7L369.3 716.8L374 716.4L378.6 715.7L383.3 715.1L388 716.1L392.6 715.9L397.3 715.7L402 716.8L406.6 716.6L411.3 716L416 715.4L420.6 715.3L425.3 714.8L430 715.2L434.7 714.9L439.3 716.2L444 733.4L448.7 733.4L453.3 735.6L458 737.8L462.7 738.3L467.4 739.9L472 742.2L476.7 739.2L481.4 739.9L486 740.8L490.7 743.2L495.4 745.1L500 753L504.7 753L509.4 753L514 741.8L518.7 745.1L523.4 745.1L528.1 745.1L532.7 748.5L537.4 753L542.1 740.8L546.7 745.1L551.4 745.1L556.1 748.5L560.8 741.8L565.4 743.2L570.1 748.5L574.8 748.5L579.4 745.1L584.1 743.2L588.8 741.8L593.4 740.8L598.1 743.2L602.8 741.8L607.4 753L612.1 745.1L616.8 753L621.5 741.8L626.1 740.8L630.8 753L635.5 753L640.1 745.1L644.8 748.5L649.5 753L654.1 753L658.8 748.5L663.5 741.8L668.2 748.5L672.8 748.5L677.5 743.2L682.2 753L686.8 748.5L691.5 745.1L696.2 739.9L700.9 737L705.5 735.5L710.2 736.2L714.9 736.6L719.5 736.2L724.2 738L728.9 740.8L733.5 748.5L738.2 745.1L742.9 748.5L747.5 743.2L752.2 743.2L756.9 753L761.6 748.5L766.2 748.5L770.9 745.1L775.6 748.5L780.2 753L784.9 745.1L789.6 745.1L794.2 743.2L798.9 753L803.6 753L808.3 748.5L812.9 748.5L817.6 748.5L822.3 741.8L826.9 745.1L831.6 745.1L836.3 753L840.9 745.1L845.6 753L850.3 745.1L855 748.5L859.6 753L864.3 745.1L869 745.1L873.6 743.2L878.3 748.5L883 743.2L887.6 748.5L892.3 743.2L897 745.1L901.7 745.1L906.3 753L911 741.8L915.7 745.1L920.3 745.1L925 748.5L929.7 753L934.3 753L939 745.1L943.7 745.1L948.4 745.1L953 745.1L957.7 748.5L962.4 748.5L967 743.2L971.7 748.5L976.4 748.5L981 748.5L985.7 743.2L990.4 743.2L995.1 740.8L999.7 753L1004.4 743.2L1009.1 745.1L1013.7 745.1L1018.4 748.5L1023.1 748.5L1027.8 745.1L1032.4 748.5L1037.1 741.8L1041.8 741.8L1046.4 741.8L1051.1 745.1L1055.8 748.5L1060.4 748.5L1065.1 748.5L1069.8 743.2L1074.5 743.2L1079.1 745.1L1083.8 740.8L1088.5 743.2L1093.1 745.1L1097.8 745.1L1102.5 753L1107.1 753L1111.8 748.5L1116.5 745.1L1121.2 745.1L1125.8 748.5L1130.5 748.5L1135.2 743.2L1139.8 753L1144.5 745.1L1149.2 748.5L1153.8 743.2L1158.5 741.8L1163.2 745.1L1167.9 745.1L1172.5 745.1L1177.2 748.5L1181.9 741.8L1186.5 745.1L1191.2 748.5L1195.9 743.2L1200.5 753L1205.2 745.1L1209.9 745.1L1214.6 739.9L1219.2 745.1L1223.9 748.5L1228.6 748.5L1233.2 745.1L1237.9 743.2L1242.6 741.8L1247.2 740.8L1251.9 748.5L1256.6 748.5L1261.2 745.1L1265.9 743.2L1270.6 748.5L1275.3 743.2L1279.9 740.8L1284.6 741.8L1289.3 745.1L1293.9 745.1L1298.6 745.1L1303.3 741.8L1308 748.5L1312.6 745.1L1317.3 745.1L1322 745.1L1326.6 741.8L1331.3 748.5L1336 753L1340.6 743.2L1345.3 748.5L1350 748.5L1354.7 748.5L1359.3 748.5L1364 748.5L1368.7 745.1L1373.3 748.5L1378 753L1382.7 753L1387.3 748.5L1392 745.1L1396.7 741.8L1401.4 740.8L1406 740.8L1410.7 745.1L1415.4 739.9L1420 743.2L1424.7 740.8L1429.4 743.2L1434 748.5L1438.7 748.5L1443.4 748.5L1448.1 748.5L1452.7 741.8L1457.4 743.2L1462.1 743.2L1466.7 748.5L1471.4 753L1476.1 745.1L1480.7 745.1L1485.4 745.1L1490.1 745.1L1494.8 745.1L1499.4 745.1L1504.1 745.1L1508.8 745.1L1513.4 748.5L1518.1 743.2L1522.8 743.2L1527.4 753L1532.1 748.5L1536.8 748.5L1541.5 745.1L1546.1 745.1L1550.8 745.1L1555.5 748.5L1560.1 745.1L1564.8 745.1L1569.5 745.1L1574.1 743.2L1578.8 745.1L1583.5 745.1L1588.2 745.1L1592.8 741.8L1597.5 748.5L1602.2 745.1L1606.8 743.2L1611.5 743.2L1616.2 745.1L1620.8 745.1L1625.5 745.1L1630.2 748.5L1634.9 753L1639.5 745.1L1644.2 748.5L1648.9 745.1L1653.5 745.1L1658.2 740.8L1662.9 741.8L1667.5 745.1L1672.2 745.1L1676.9 745.1L1681.5 748.5L1686.2 753L1690.9 739.9L1695.6 748.5L1700.2 745.1L1704.9 741.8L1709.6 741.8L1714.2 741.8L1718.9 740.8L1723.6 753L1728.2 748.5L1732.9 748.5L1737.6 748.5L1742.3 740.8L1746.9 745.1L1751.6 748.5L1756.3 745.1L1760.9 748.5L1765.6 748.5L1770.3 748.5L1770.3 754L70.4 754Z" fill="#3366cc" fill-opacity="0.1" stroke="none"/><path d="M70.4 714.6L75.1 715.1L79.7 715.1L84.4 714.9L89.1 714.9L93.8 715.3L98.4 714.3L103.1 714.7L107.8 715.1L112.4 714.8L117.1 715.1L121.8 714.7L126.4 715.1L131.1 715.1L135.8 714.8L140.4 715.2L145.1 715.5L149.8 715.1L154.5 714.3L159.1 715.2L163.8 713.6L168.5 712.4L173.1 713.6L177.8 715.1L182.5 714.8L187.2 715.3L191.8 715L196.5 714L201.2 714.7L205.8 715L210.5 715L215.2 714.4L219.8 714.3L224.5 714.8L229.2 714.2L233.8 714.7L238.5 715.2L243.2 714.9L247.9 714.8L252.5 714.8L257.2 714.9L261.9 713.9L266.5 714.6L271.2 714.7L275.9 714.9L280.6 714.8L285.2 714.8L289.9 714.8L294.6 714.4L299.2 714.8L303.9 714.9L308.6 715.1L313.2 714.2L317.9 714.5L322.6 714.7L327.2 714.2L331.9 714.5L336.6 715.3L341.3 715.6L345.9 715.6L350.6 715.4L355.3 715.7L359.9 715.2L364.6 715.7L369.3 716.8L374 716.4L378.6 715.7L383.3 715.1L388 716.1L392.6 715.9L397.3 715.7L402 716.8L406.6 716.6L411.3 716L416 715.4L420.6 715.3L425.3 714.8L430 715.2L434.7 714.9L439.3 716.2L444 733.4L448.7 733.4L453.3 735.6L458 737.8L462.7 738.3L467.4 739.9L472 742.2L476.7 739.2L481.4 739.9L486 740.8L490.7 743.2L495.4 745.1L500 753L504.7 753L509.4 753L514 741.8L518.7 745.1L523.4 745.1L528.1 745.1L532.7 748.5L537.4 753L542.1 740.8L546.7 745.1L551.4 745.1L556.1 748.5L560.8 741.8L565.4 743.2L570.1 748.5L574.8 748.5L579.4 745.1L584.1 743.2L588.8 741.8L593.4 740.8L598.1 743.2L602.8 741.8L607.4 753L612.1 745.1L616.8 753L621.5 741.8L626.1 740.8L630.8 753L635.5 753L640.1 745.1L644.8 748.5L649.5 753L654.1 753L658.8 748.5L663.5 741.8L668.2 748.5L672.8 748.5L677.5 743.2L682.2 753L686.8 748.5L691.5 745.1L696.2 739.9L700.9 737L705.5 735.5L710.2 736.2L714.9 736.6L719.5 736.2L724.2 738L728.9 740.8L733.5 748.5L738.2 745.1L742.9 748.5L747.5 743.2L752.2 743.2L756.9 753L761.6 748.5L766.2 748.5L770.9 745.1L775.6 748.5L780.2 753L784.9 745.1L789.6 745.1L794.2 743.2L798.9 753L803.6 753L808.3 748.5L812.9 748.5L817.6 748.5L822.3 741.8L826.9 745.1L831.6 745.1L836.3 753L840.9 745.1L845.6 753L850.3 745.1L855 748.5L859.6 753L864.3 745.1L869 745.1L873.6 743.2L878.3 748.5L883 743.2L887.6 748.5L892.3 743.2L897 745.1L901.7 745.1L906.3 753L911 741.8L915.7 745.1L920.3 745.1L925 748.5L929.7 753L934.3 753L939 745.1L943.7 745.1L948.4 745.1L953 745.1L957.7 748.5L962.4 748.5L967 743.2L971.7 748.5L976.4 748.5L981 748.5L985.7 743.2L990.4 743.2L995.1 740.8L999.7 753L1004.4 743.2L1009.1 745.1L1013.7 745.1L1018.4 748.5L1023.1 748.5L1027.8 745.1L1032.4 748.5L1037.1 741.8L1041.8 741.8L1046.4 741.8L1051.1 745.1L1055.8 748.5L1060.4 748.5L1065.1 748.5L1069.8 743.2L1074.5 743.2L1079.1 745.1L1083.8 740.8L1088.5 743.2L1093.1 745.1L1097.8 745.1L1102.5 753L1107.1 753L1111.8 748.5L1116.5 745.1L1121.2 745.1L1125.8 748.5L1130.5 748.5L1135.2 743.2L1139.8 753L1144.5 745.1L1149.2 748.5L1153.8 743.2L1158.5 741.8L1163.2 745.1L1167.9 745.1L1172.5 745.1L1177.2 748.5L1181.9 741.8L1186.5 745.1L1191.2 748.5L1195.9 743.2L1200.5 753L1205.2 745.1L1209.9 745.1L1214.6 739.9L1219.2 745.1L1223.9 748.5L1228.6 748.5L1233.2 745.1L1237.9 743.2L1242.6 741.8L1247.2 740.8L1251.9 748.5L1256.6 748.5L1261.2 745.1L1265.9 743.2L1270.6 748.5L1275.3 743.2L1279.9 740.8L1284.6 741.8L1289.3 745.1L1293.9 745.1L1298.6 745.1L1303.3 741.8L1308 748.5L1312.6 745.1L1317.3 745.1L1322 745.1L1326.6 741.8L1331.3 748.5L1336 753L1340.6 743.2L1345.3 748.5L1350 748.5L1354.7 748.5L1359.3 748.5L1364 748.5L1368.7 745.1L1373.3 748.5L1378 753L1382.7 753L1387.3 748.5L1392 745.1L1396.7 741.8L1401.4 740.8L1406 740.8L1410.7 745.1L1415.4 739.9L1420 743.2L1424.7 740.8L1429.4 743.2L1434 748.5L1438.7 748.5L1443.4 748.5L1448.1 748.5L1452.7 741.8L1457.4 743.2L1462.1 743.2L1466.7 748.5L1471.4 753L1476.1 745.1L1480.7 745.1L1485.4 745.1L1490.1 745.1L1494.8 745.1L1499.4 745.1L1504.1 745.1L1508.8 745.1L1513.4 748.5L1518.1 743.2L1522.8 743.2L1527.4 753L1532.1 748.5L1536.8 748.5L1541.5 745.1L1546.1 745.1L1550.8 745.1L1555.5 748.5L1560.1 745.1L1564.8 745.1L1569.5 745.1L1574.1 743.2L1578.8 745.1L1583.5 745.1L1588.2 745.1L1592.8 741.8L1597.5 748.5L1602.2 745.1L1606.8 743.2L1611.5 743.2L1616.2 745.1L1620.8 745.1L1625.5 745.1L1630.2 748.5L1634.9 753L1639.5 745.1L1644.2 748.5L1648.9 745.1L1653.5 745.1L1658.2 740.8L1662.9 741.8L1667.5 745.1L1672.2 745.1L1676.9 745.1L1681.5 748.5L1686.2 753L1690.9 739.9L1695.6 748.5L1700.2 745.1L1704.9 741.8L1709.6 741.8L1714.2 741.8L1718.9 740.8L1723.6 753L1728.2 748.5L1732.9 748.5L1737.6 748.5L1742.3 740.8L1746.9 745.1L1751.6 748.5L1756.3 745.1L1760.9 748.5L1765.6 748.5L1770.3 748.5" fill="none" stroke="#3366cc" stroke-width="1.100" stroke-linejoin="round"/>
<g font-size="11" fill="#444" text-anchor="end" stroke="#fff" stroke-width="3.600" stroke-linejoin="round" paint-order="stroke" stroke-opacity="0.95"><text x="99.4" y="748.500">14</text><text x="183.5" y="748.500">September 23</text><text x="197.5" y="748.500">4</text><text x="230.2" y="748.500">11</text><text x="323.6" y="748.500">October 23</text><text x="360.9" y="748.500">9</text><text x="393.6" y="748.500">16</text><text x="468.3" y="748.500">November 23</text><text x="491.7" y="748.500">6</text><text x="524.4" y="748.500">13</text><text x="608.4" y="748.500">December 23</text><text x="622.4" y="748.500">4</text><text x="655.1" y="748.500">11</text><text x="687.8" y="748.500">18</text><text x="753.2" y="748.500">January 24</text><text x="785.9" y="748.500">8</text><text x="818.6" y="748.500">15</text><text x="898" y="748.500">February 24</text><text x="916.6" y="748.500">5</text><text x="949.3" y="748.500">12</text><text x="1033.4" y="748.500">March 24</text><text x="1047.4" y="748.500">4</text><text x="1080.1" y="748.500">11</text><text x="1112.8" y="748.500">18</text><text x="1178.2" y="748.500">April 24</text><text x="1210.9" y="748.500">8</text><text x="1243.5" y="748.500">15</text><text x="1318.3" y="748.500">May 24</text><text x="1341.6" y="748.500">6</text><text x="1374.3" y="748.500">13</text><text x="1407" y="748.500">20</text><text x="1463" y="748.500">June 24</text><text x="1505.1" y="748.500">10</text><text x="1537.8" y="748.500">17</text><text x="1603.1" y="748.500">July 24</text><text x="1635.8" y="748.500">8</text><text x="1668.5" y="748.500">15</text><text x="1747.9" y="748.500">August 24</text><text x="1766.6" y="748.500">5</text></g>
<path d="M70.4 703.800V754" stroke="#000" stroke-width="1.500"/><path d="M67.7 718.700h5.400l3.800 3.500v13l-3.800 3.500h-5.400l-3.800-3.500v-13z" fill="#fff" stroke="#000" stroke-width="1.200"/><path d="M69.1 722.500v12.500M71.7 722.500v12.500" stroke="#000" stroke-width="1.200"/><path d="M1771.9 703.800V754" stroke="#000" stroke-width="1.500"/><path d="M1769.2 718.700h5.400l3.800 3.500v13l-3.800 3.500h-5.400l-3.800-3.500v-13z" fill="#fff" stroke="#000" stroke-width="1.200"/><path d="M1770.6 722.500v12.500M1773.2 722.500v12.500" stroke="#000" stroke-width="1.200"/>
</svg>
<div class="t" style="left:90px;top:673px;font-size:18px;color:#0b57d0;-webkit-text-stroke:0.25px #0b57d0">Add</div>
<div class="abs" style="left:161px;top:662px;width:70px;height:37px;border:1px solid #5f6368;border-radius:5px;box-sizing:content-box;text-align:center;line-height:38px;font-size:18px;color:#444746">1000</div>
<div class="t" style="left:243px;top:676px;font-size:18px;color:#444746">more rows at the bottom</div>
<div class="abs" style="left:1905px;top:0;width:1px;height:714px;background:#d0d0d0"></div><div class="abs" style="left:1906px;top:0;width:14px;height:674px;background:#fff"></div><div class="abs" style="left:1906px;top:0;width:14px;height:29px;background:#f5f5f6;border-bottom:1px solid #c8c8c8"></div><div class="abs" style="left:1906px;top:674px;width:14px;height:40px;background:#f8f9fa"></div><div class="abs" style="left:1906px;top:674px;width:14px;height:1px;background:#dadce0"></div><div class="abs" style="left:1906px;top:694px;width:14px;height:1px;background:#dadce0"></div><div class="abs" style="left:1906px;top:693px;width:9px;height:1px;background:#a8c7fa"></div><div class="abs" style="left:1909px;top:681px;width:0;height:0;border-left:3.5px solid transparent;border-right:3.5px solid transparent;border-bottom:4px solid #8a8a8a"></div><div class="abs" style="left:1909px;top:702px;width:0;height:0;border-left:3.5px solid transparent;border-right:3.5px solid transparent;border-top:4px solid #8a8a8a"></div>
</div>
<div class="abs" style="left:0;top:816px;width:1920px;height:1px;background:#dadce0"></div><div class="abs" style="left:0;top:817px;width:57px;height:15px;background:#f8f9fa;border-right:1px solid #c0c0c0"></div><div class="abs" style="left:58px;top:817px;width:1810px;height:15px;background:#fff"></div><div class="abs" style="left:1868px;top:817px;width:52px;height:15px;background:#f8f9fa"></div><div class="abs" style="left:1868px;top:817px;width:1px;height:15px;background:#d0d0d0"></div><div class="abs" style="left:1888px;top:817px;width:1px;height:15px;background:#d0d0d0"></div><div class="abs" style="left:1905px;top:817px;width:1px;height:15px;background:#d0d0d0"></div><div class="abs" style="left:1907px;top:817px;width:1px;height:15px;background:#d0d0d0"></div><div class="abs" style="left:1875px;top:820.5px;width:0;height:0;border-top:3.5px solid transparent;border-bottom:3.5px solid transparent;border-right:4.5px solid #8a8a8a"></div><div class="abs" style="left:1896px;top:820.5px;width:0;height:0;border-top:3.5px solid transparent;border-bottom:3.5px solid transparent;border-left:4.5px solid #8a8a8a"></div>
<div class="abs" style="left:0;top:832px;width:1920px;height:1px;background:#dadce0"></div>
<div class="tabbar">
<svg class="ic" style="left:69px;top:15px" width="15" height="15" viewBox="0 0 15 15"><path d="M7.5 1v13M1 7.5h13" stroke="#444746" stroke-width="1.9" fill="none"/></svg><svg class="ic" style="left:117px;top:16px" width="19" height="14" viewBox="0 0 19 14"><path d="M0 1.5h18.5M0 7h18.5M0 12.5h18.5" stroke="#444746" stroke-width="1.9" fill="none"/></svg>
<div class="abs" style="left:156px;top:10px;width:1px;height:25px;background:#80868b"></div>
<div class="abs" style="left:566px;top:0;width:248px;height:46px;background:#e1e9f7"></div>
<div class="tab" style="left:158.0px;letter-spacing:0.39px;">viewed</div><div class="dd" style="left:232px;top:21px;"></div><div class="tab" style="left:272.5px;letter-spacing:0.17px;">SEO Audit</div><div class="dd" style="left:372px;top:21px;"></div><div class="tab" style="left:413.0px;letter-spacing:0.44px;">Domain Stats</div><div class="dd" style="left:541px;top:21px;"></div><div class="tab" style="left:581.0px;letter-spacing:0.20px;color:#0b57d0;font-weight:bold;-webkit-text-stroke:0;">Historic Domain Stats</div><div class="dd" style="left:789px;top:21px;border-top-color:#0b57d0"></div><div class="tab" style="left:829.0px;letter-spacing:0.17px;">Rankings</div><div class="dd" style="left:920px;top:21px;"></div><div class="tab" style="left:961.4px;letter-spacing:0.22px;">Rank Tracker</div><div class="dd" style="left:1087px;top:21px;"></div><div class="tab" style="left:1128.0px;letter-spacing:0.43px;">Winners and Losers Keywords</div><div class="dd" style="left:1401px;top:21px;"></div><div class="tab" style="left:1442.2px;letter-spacing:0.26px;">Winners And Losers URLs</div><div class="dd" style="left:1676px;top:21px;"></div>
<svg class="ic" style="left:1721px;top:15px" width="12" height="16" viewBox="0 0 12 16"><path d="M9.5 1.5L3 8l6.500 6.500" stroke="#444746" stroke-width="2" fill="none"/></svg><svg class="ic" style="left:1771px;top:15px" width="12" height="16" viewBox="0 0 12 16"><path d="M2.500 1.500L9 8l-6.500 6.500" stroke="#b5b8bb" stroke-width="2" fill="none"/></svg>
</div>
</body></html>
